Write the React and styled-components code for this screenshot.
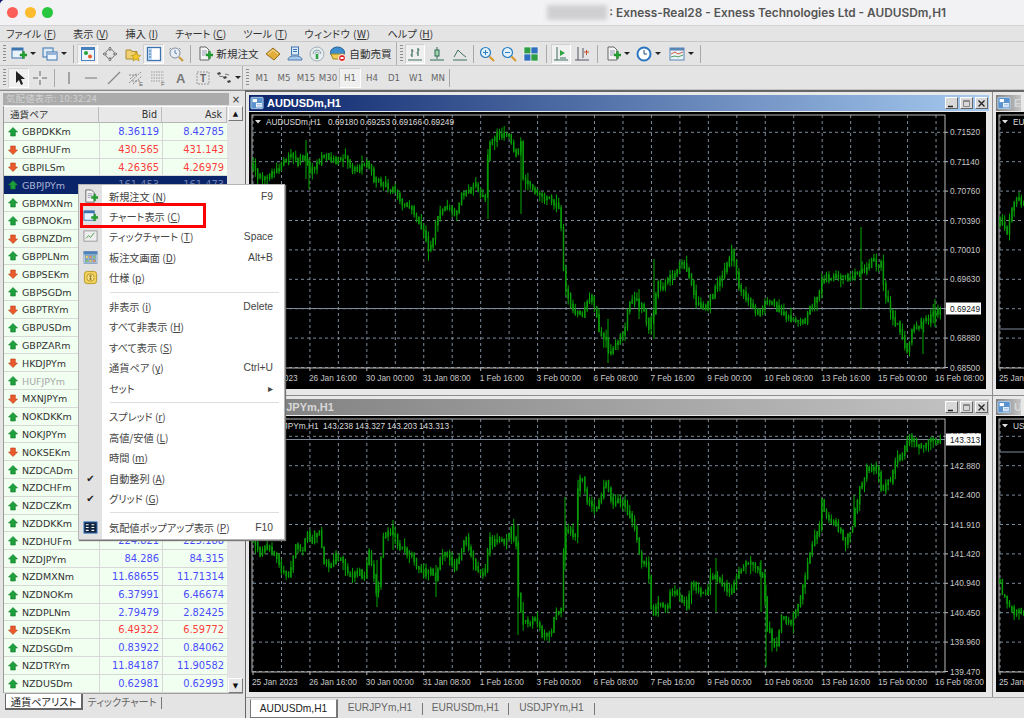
import React from 'react';
import styled, { createGlobalStyle } from 'styled-components';

const GlobalStyle = createGlobalStyle`
  html, body { margin: 0; padding: 0; background: #14146e; }
  * { box-sizing: border-box; }
`;

const CJK = '"Noto Sans CJK JP", "DejaVu Sans", sans-serif';
const UI = '"DejaVu Sans", "Noto Sans CJK JP", sans-serif';

const Shell = styled.div`
  width: 1024px;
  height: 718px;
  overflow: hidden;
  position: relative;
  display: flex;
  flex-direction: column;
  background: #e4e4e4;
  border-top-left-radius: 5px;
  font-family: ${CJK};
  color: #333;
`;

/* mac title bar */
const TitleBar = styled.div`
  height: 26px;
  flex: none;
  display: flex;
  align-items: center;
  padding: 0 78px 0 7px;
  background: #f2f2f4;
  border-bottom: 1px solid #d2d2d2;
`;
const Light = styled.span`
  width: 11px;
  height: 11px;
  border-radius: 50%;
  margin-right: 6.7px;
  background: ${(p) => p.$c};
`;
const BlurPatch = styled.span`
  width: 60px;
  height: 15px;
  margin-left: auto;
  background: #cfcfd1;
  filter: blur(2px);
`;
const WinTitle = styled.span`
  font: 600 11.85px Inter, "Liberation Sans", sans-serif;
  color: #555;
  margin-left: 2px;
  white-space: nowrap;
`;

const MenuBar = styled.div`
  height: 16px;
  flex: none;
  display: flex;
  align-items: center;
  padding-left: 6px;
  gap: 17px;
  font-size: 10.2px;
  font-feature-settings: "palt";
  border-bottom: 1px solid #c8c8c8;
`;
const MenuName = styled.span`
  white-space: nowrap;
  letter-spacing: ${(p) => (p.$wide ? '0.5px' : '0')};
`;
const U = styled.span`
  text-decoration: underline;
  text-underline-offset: 1px;
`;

const ToolRow = styled.div`
  height: 24px;
  flex: none;
  display: flex;
  align-items: center;
  padding-left: 3px;
  border-bottom: 1px solid #c4c4c4;
`;
const ToolGroup = styled.div`
  height: 23px;
  display: flex;
  align-items: center;
  padding-right: ${(p) => p.$pr ?? 4}px;
  border-right: 1px solid #b0b0b0;
  margin-right: 3px;
`;
const Grip = styled.span`
  width: 3px;
  height: 17px;
  margin-right: 2px;
  background: repeating-linear-gradient(#8c8c8c 0 1px, #e4e4e4 1px 3px);
`;
const ToolSep = styled.span`
  width: 1px;
  height: 18px;
  margin: 0 ${(p) => p.$m ?? 3}px;
  background: #a8a8a8;
`;
const ToolBtn = styled.span`
  width: ${(p) => p.$w ?? 21}px;
  height: 20px;
  flex: none;
  display: flex;
  align-items: center;
  justify-content: center;
  gap: 3px;
  font-size: 10.6px;
  color: #333;
  white-space: nowrap;
  ${(p) => p.$on && 'background: #f0f0f0; border: 1px solid #cfcfcf; border-bottom-color: #fff; border-right-color: #fff;'}
`;
const PeriodBtn = styled(ToolBtn)`
  width: 22px;
  font: 8.6px "DejaVu Sans", sans-serif;
  color: #666;
`;
const Caret = styled.span`
  width: 0;
  height: 0;
  flex: none;
  border-left: 3px solid transparent;
  border-right: 3px solid transparent;
  border-top: 3px solid #222;
`;
const Glyph = styled.svg`
  width: ${(p) => p.$s ?? 16}px;
  height: ${(p) => p.$s ?? 16}px;
  flex: none;
  display: block;
`;

const Body = styled.div`
  flex: 1;
  min-height: 0;
  display: flex;
`;

/* market watch */
const Watch = styled.div`
  width: 245px;
  flex: none;
  padding: 2px 2px 0 3px;
  display: flex;
  flex-direction: column;
  border-top: 1px solid #888;
`;
const WatchHead = styled.div`
  height: 12px;
  display: flex;
  align-items: center;
  margin-bottom: 1px;
`;
const WatchTitle = styled.div`
  width: 226px;
  height: 12px;
  line-height: 11px;
  padding-left: 3px;
  background: #ababab;
  color: #d2d2d2;
  font-size: 9.4px;
  letter-spacing: 0.2px;
`;
const WatchClose = styled.span`
  flex: 1;
  text-align: center;
  font: 10px "DejaVu Sans", sans-serif;
  color: #333;
`;
const TableWrap = styled.div`
  display: grid;
  grid-template-columns: 223px 16px;
  border-left: 1px solid #9a9a9a;
`;
const Table = styled.div`
  display: flex;
  flex-direction: column;
  height: 587px;
  overflow: hidden;
`;
const Cols = `
  display: grid;
  grid-template-columns: 95px 63px 65px;
`;
const HeadRow = styled.div`
  ${Cols}
  height: 17px;
  flex: none;
  background: #e8e8e8;
  border-top: 1px solid #fff;
  border-bottom: 1px solid #b4b4b4;
`;
const HeadCell = styled.div`
  font: 9.6px ${UI};
  line-height: 16px;
  padding: 0 ${(p) => (p.$num ? '4px' : '0')} 0 ${(p) => (p.$num ? '0' : '6px')};
  text-align: ${(p) => (p.$num ? 'right' : 'left')};
  border-right: 1px solid #bcbcbc;
`;
const Row = styled.div`
  ${Cols}
  height: 17.8px;
  flex: none;
  background: ${(p) => (p.$sel ? '#0a246a' : '#f1fff1')};
  box-shadow: inset 0 -1px 0 ${(p) => (p.$sel ? '#0a246a' : '#d8d8d8')};
`;
const NameCell = styled.div`
  display: flex;
  align-items: center;
  gap: 3px;
  padding-left: 3px;
  font: 9.5px ${UI};
  color: ${(p) => (p.$sel ? '#a9b4d2' : p.$dim ? '#a8a8a8' : '#333')};
`;
const NumCell = styled.div`
  font: 9.9px ${UI};
  line-height: 17px;
  text-align: right;
  padding-right: 3px;
  color: ${(p) => (p.$sel ? '#6f80b0' : p.$up ? '#4a4aff' : '#ff3c3c')};
  box-shadow: inset 1px 0 0 ${(p) => (p.$sel ? '#0a246a' : '#d8d8d8')};
`;
const Scroll = styled.div`
  display: flex;
  flex-direction: column;
  justify-content: space-between;
  padding-left: 1px;
  height: 587px;
`;
const ScrollBtn = styled.div`
  height: 15px;
  background: #e8e8e8;
  border: 1px solid #fff;
  border-right-color: #777;
  border-bottom-color: #777;
  display: flex;
  align-items: center;
  justify-content: center;
  font: 7px "DejaVu Sans", sans-serif;
  color: #111;
`;
const WatchTabs = styled.div`
  display: flex;
  align-items: center;
  height: 18px;
  margin-left: 2px;
  border-top: 1px solid #a0a0a0;
  font-size: 10.2px;
  font-feature-settings: "palt";
  white-space: nowrap;
`;
const WatchTab = styled.div`
  height: 16px;
  margin-top: -1px;
  line-height: 15px;
  width: ${(p) => p.$w}px;
  text-align: center;
  ${(p) => (p.$on
    ? 'background: #fff; color: #222; border: 1px solid #666; border-top: 0; border-right-width: 2px; border-bottom-width: 2px;'
    : 'color: #666;')}
`;
const TabSep = styled.span`
  width: 1px;
  height: 12px;
  background: #777;
  margin-left: ${(p) => p.$m ?? 0}px;
`;

/* chart windows */
const Mdi = styled.div`
  flex: 1;
  min-width: 0;
  display: flex;
  flex-direction: column;
  border-left: 1px solid #666;
  border-top: 2px solid #666;
  background: #d0d0d0;
`;
const WinGrid = styled.div`
  display: grid;
  grid-template-columns: 746px 1fr;
  grid-template-rows: 303px 302px;
  overflow: hidden;
  background: #8c8c8c;
  column-gap: 1px;
  row-gap: 1px;
`;
const Win = styled.div`
  background: #e8e8e8;
  padding: 3px;
  overflow: hidden;
  min-width: 0;
`;
const WinBar = styled.div`
  height: 16px;
  display: flex;
  align-items: center;
  gap: 3px;
  padding-left: 1px;
  margin-bottom: 1px;
  overflow: hidden;
  white-space: nowrap;
  background: ${(p) => (p.$active
    ? 'linear-gradient(90deg, #0a246a, #a6caf0)'
    : 'linear-gradient(90deg, #808080, #c4c4c4)')};
  color: ${(p) => (p.$active ? '#fff' : '#d8d8d8')};
  font: bold 11px "Liberation Sans", sans-serif;
`;
const WinName = styled.span`
  margin-left: ${(p) => p.$nudge ?? 0}px;
`;
const WinBtns = styled.div`
  margin-left: auto;
  display: flex;
  gap: 2px;
  padding-right: 1px;
`;
const WinBtn = styled.span`
  width: 13px;
  height: 12px;
  background: #d8d8d8;
  border: 1px solid #fff;
  border-right-color: #666;
  border-bottom-color: #666;
  color: ${(p) => (p.$off ? '#999' : '#222')};
  display: flex;
  align-items: center;
  justify-content: center;
`;
const ChartSvg = styled.svg`
  display: block;
  background: #000;
  font-family: "Liberation Sans", sans-serif;
  font-size: 8.3px;
`;

const ChartTabs = styled.div`
  flex: 1;
  display: flex;
  align-items: flex-start;
  padding-left: 4px;
  background: #e4e4e4;
  border-top: 1px solid #aaa;
  font: 10.2px "Liberation Sans", sans-serif;
  color: #666;
`;
const ChartTab = styled.div`
  height: 19px;
  margin-top: 1px;
  line-height: 17px;
  width: ${(p) => p.$w}px;
  text-align: center;
  ${(p) => p.$on && 'background: #fff; color: #222; border: 1px solid #777; border-top: 1px solid #ddd; border-right-width: 2px;'}
`;
const ChartTabSep = styled(TabSep)`
  margin-top: 5px;
  flex: none;
`;

/* context menu */
const Popup = styled.div`
  position: absolute;
  left: 78px;
  top: 184px;
  width: 207px;
  height: 356px;
  padding: 1px 0;
  background: linear-gradient(90deg, #e2e2e2 23px, #fff 23px);
  border: 1px solid #b4b4b4;
  box-shadow: 1px 1px 1px #777;
  font-size: 10.2px;
  font-feature-settings: "palt";
  color: #444;
`;
const Item = styled.div`
  height: 20.4px;
  display: grid;
  grid-template-columns: 22px 1fr auto;
  align-items: center;
  padding-right: 11px;
  white-space: nowrap;
`;
const ItemIcon = styled.span`
  display: flex;
  justify-content: center;
  padding-left: 1px;
`;
const ItemText = styled.span`
  padding-left: 8px;
`;
const ItemKey = styled.span`
  font: 10.3px "Liberation Sans", sans-serif;
  color: #444;
`;
const Sep = styled.div`
  height: 8.4px;
  margin-left: 31px;
  margin-right: 5px;
  display: flex;
  align-items: center;
  &::after { content: ""; flex: 1; height: 1px; background: #dedede; }
`;
const RedBox = styled.div`
  position: absolute;
  left: 1px;
  top: 18px;
  width: 126px;
  height: 25px;
  border: 3px solid #f00;
`;
const Check = styled.span`
  font: 10px "DejaVu Sans", sans-serif;
  color: #222;
`;

/* icons */
const icons = {
  plus: <path d="M9 8h2.500V5.500h2V8H16v2h-2.500v2.500h-2V10H9z" fill="#22a52e" stroke="#0d6e18" strokeWidth=".4" />,
  win: <g><rect x="1" y="2" width="11" height="10" fill="#e8f2fb" stroke="#3d74b0" /><rect x="1" y="2" width="11" height="2.500" fill="#3d74b0" /></g>,
  child: <g><rect x="1" y="1.500" width="14" height="13" rx="1" fill="#5b93cf" stroke="#d8e8f8" strokeWidth=".8" /><rect x="3" y="3.500" width="5" height="3.500" fill="#fff" /><rect x="7" y="8" width="6.500" height="5" fill="#fff" /><path d="M8 9.500h5M8 11.500h5" stroke="#5b93cf" strokeWidth=".7" /></g>,
  doc: <g><path d="M3 1h6l3 3v10H3z" fill="#f4f4f4" stroke="#666" /><path d="M5 5h5M5 7h5M5 9h3" stroke="#88a" strokeWidth=".8" /></g>,
  profiles: <g><rect x="1" y="2" width="10" height="9" fill="#dbe9f7" stroke="#3d74b0" /><rect x="5" y="6" width="10" height="8" fill="#eef4fb" stroke="#3d74b0" /><path d="M6 8h8" stroke="#3d74b0" /></g>,
  market: <g><rect x="1.500" y="1.500" width="13" height="13" fill="#eef5fc" stroke="#4a80bb" /><rect x="2" y="2" width="12" height="2" fill="#4a80bb" /><circle cx="6" cy="7" r="2" fill="#27a33a" /><circle cx="10" cy="10.500" r="2" fill="#e2602c" /></g>,
  nav: <g fill="none" stroke="#777"><circle cx="8" cy="8" r="4.500" /><path d="M8 1v4M8 11v4M1 8h4M11 8h4" /><path d="M6.500 2.500 8 1l1.500 1.500M6.500 13.500 8 15l1.500-1.500M2.500 6.500 1 8l1.500 1.500M13.500 6.500 15 8l-1.500 1.500" /></g>,
  star: <g><path d="M1 4h5l1 1.500h5V13H1z" fill="#f0d070" stroke="#a98a30" /><path d="M11 6l1.500 3 3.300.4-2.400 2.200.7 3.300L11 13.300 8 15l.7-3.300-2.400-2.200 3.300-.4z" fill="#f3c629" stroke="#b08d10" strokeWidth=".6" /></g>,
  term: <g><rect x="1.500" y="1.500" width="13" height="13" fill="#fff" stroke="#3d74b0" strokeWidth="1.300" /><rect x="2" y="2" width="4" height="12" fill="#bcd6f0" /><path d="M3 5h2M3 8h2M3 11h2" stroke="#3d74b0" /></g>,
  tester: <g fill="none"><circle cx="7" cy="7" r="5" fill="#e8eef4" stroke="#7f8fa3" /><path d="M7 4v3l2 1" stroke="#5a7ea8" /><path d="M3 2 1.500 3.500M11 2l1.500 1.500" stroke="#7f8fa3" /><path d="M11 11l4 4" stroke="#c69a3c" strokeWidth="2" /></g>,
  book: <g><path d="M1 8l7-6 7 6-6 6z" fill="#e2ad3b" stroke="#96701b" /><path d="M3 8l5-4 5 4" stroke="#f6e2a6" fill="none" /></g>,
  signal: <g><path d="M1 14c0-3 3-4 7-4s7 1 7 4z" fill="#a9c8ea" stroke="#4d7fb5" /><rect x="4.500" y="1" width="7" height="8" fill="#dcebfa" stroke="#3d74b0" /><path d="M6 3.500h4M6 5.500h4" stroke="#3d74b0" /></g>,
  mql: <g fill="none"><circle cx="8" cy="8" r="7" fill="#e6ecef" stroke="#9fb0b8" /><path d="M4 8a4 4 0 0 1 8 0M6 8a2 2 0 0 1 4 0" stroke="#8aa" /><path d="M8 8v5" stroke="#2ea33f" strokeWidth="2.500" /></g>,
  auto: <g><ellipse cx="7.500" cy="6.500" rx="7" ry="5.500" fill="#3f8fcf" stroke="#245e91" /><path d="M1 8h13l-1 5H3z" fill="#f0cd50" stroke="#a48820" /><circle cx="12" cy="12" r="3.500" fill="#e02020" stroke="#fff" /><rect x="10.500" y="11" width="3" height="2" fill="#fff" /></g>,
  bars: <g stroke="#3f6f62" strokeWidth="1.200" fill="none"><path d="M1 14h14M5 3v8M3.500 9H5M5 5h1.500M11 2v8M9.500 7H11M11 4h1.500" /></g>,
  candle: <g stroke="#2e6b57" fill="none"><path d="M1 14h14M8 1v12" /><rect x="6" y="4" width="4" height="6" fill="#9ed4a8" stroke="#2e6b57" /></g>,
  line: <g stroke="#3f6f62" fill="none"><path d="M1 14h14M2 11l4-7 4 4 4 3" /></g>,
  zoomIn: <g fill="none"><circle cx="6.500" cy="6.500" r="5" fill="#e2f1fb" stroke="#2a7fc4" strokeWidth="1.200" /><path d="M4 6.500h5M6.500 4v5" stroke="#2a7fc4" /><path d="M10.500 10.500l4.500 4.500" stroke="#d99a30" strokeWidth="2.200" /></g>,
  zoomOut: <g fill="none"><circle cx="6.500" cy="6.500" r="5" fill="#e2f1fb" stroke="#2a7fc4" strokeWidth="1.200" /><path d="M4 6.500h5" stroke="#2a7fc4" /><path d="M10.500 10.500l4.500 4.500" stroke="#d99a30" strokeWidth="2.200" /></g>,
  tile: <g stroke="#fff" strokeWidth=".6"><rect x="1" y="1" width="7" height="7" fill="#2f9e44" /><rect x="8" y="1" width="7" height="7" fill="#2f6fc0" /><rect x="1" y="8" width="7" height="7" fill="#2f6fc0" /><rect x="8" y="8" width="7" height="7" fill="#2f9e44" /></g>,
  scroll: <g fill="none" stroke="#3f6f62"><path d="M1 14h14M4 1v13" /><path d="M7 4l5 3-5 3z" fill="#2ea33f" stroke="none" /><path d="M7 12h6" /></g>,
  shift: <g fill="none" stroke="#556"><path d="M1 14h14M4 1v13M9 2v10" /><path d="M10 6h5M12.500 4v5" stroke="#c65028" /></g>,
  period: <g fill="none"><circle cx="8" cy="8" r="6.500" fill="#fff" stroke="#2a76c0" strokeWidth="2" /><path d="M8 4v4h3" stroke="#1d4e80" /></g>,
  template: <g><rect x="1" y="2" width="14" height="12" fill="#eaf2fb" stroke="#5a86b5" /><rect x="1" y="2" width="14" height="2.500" fill="#5a86b5" /><path d="M2 8l4-2 3 2 5-2" stroke="#d05a3a" fill="none" /><path d="M2 11l4-1 3 1 5-2" stroke="#4aa05a" fill="none" /></g>,
  cursor: <path d="M5 1v12l3-3 2 5 2-1-2-5h4z" fill="#222" />,
  cross: <path d="M8 1v5M8 10v5M1 8h5M10 8h5" stroke="#666" fill="none" />,
  vline: <path d="M8 2v12" stroke="#777" strokeWidth="1.200" />,
  hline: <path d="M2 8h12" stroke="#777" strokeWidth="1.200" />,
  trend: <path d="M2 14 14 2" stroke="#888" strokeWidth="1.200" />,
  fib: <g stroke="#888" fill="none"><path d="M1 13 13 2M2 9l7-6M5 14l9-8M1 5h9M4 11h9" strokeDasharray="2 1" /><text x="11" y="16" fontSize="6" fill="#666" stroke="none" fontFamily="Liberation Sans">E</text></g>,
  fibo: <g stroke="#999" fill="none"><path d="M1 2h13M1 5h13M1 8h13M1 11h13" strokeDasharray="1.500 1" /><text x="11" y="16" fontSize="6" fill="#666" stroke="none" fontFamily="Liberation Sans">F</text></g>,
  letter: <text x="3" y="13" fontSize="13" fontWeight="bold" fill="#777" fontFamily="Liberation Sans">A</text>,
  textBox: <g><rect x="2" y="2" width="12" height="12" fill="none" stroke="#999" strokeDasharray="2 1" /><text x="5" y="12" fontSize="10" fontWeight="bold" fill="#666" fontFamily="Liberation Sans">T</text></g>,
  shapes: <g fill="#444"><path d="M1 3l3-1 1 2-3 1zM7 7l3-1 1 2-3 1zM11 11l3-1 1 2-3 1z" /><path d="M3 6l5 1M9 4l4 1" stroke="#777" /></g>,
  tick: <g><rect x="1" y="2" width="14" height="11" fill="#eee" stroke="#999" /><path d="M3 10l3-3 2 2 4-5" stroke="#46a046" fill="none" /></g>,
  board: <g stroke="#6a8fb5" strokeWidth=".7"><rect x="1" y="1.500" width="14" height="13" fill="#cfe2f5" /><rect x="1" y="1.500" width="14" height="3" fill="#4a80bb" /><rect x="2.500" y="6" width="3" height="3" fill="#f0d060" /><rect x="6.500" y="6" width="3" height="3" fill="#f09060" /><rect x="10.500" y="6" width="3" height="3" fill="#90c870" /><rect x="2.500" y="10" width="3" height="3" fill="#90c870" /><rect x="6.500" y="10" width="3" height="3" fill="#f0d060" /><rect x="10.500" y="10" width="3" height="3" fill="#f09060" /></g>,
  coin: <g><rect x="1.500" y="1.500" width="13" height="13" rx="3" fill="#f2d25a" stroke="#b8962a" /><circle cx="8" cy="8" r="4" fill="#f7e28c" stroke="#b8962a" /><path d="M8 5v6M6.500 6.500h3M6.500 9.500h3" stroke="#8a6a10" strokeWidth=".8" /></g>,
  popup: <g><rect x="1" y="2" width="14" height="12" fill="#10233f" stroke="#3f82c8" /><path d="M3 5h3M3 8h3M3 11h3M9 5h3M9 8h3M9 11h3" stroke="#fff" strokeWidth="1.200" /></g>,
};

function Ico({ name, plus, size }) {
  return (
    <Glyph viewBox="0 0 16 16" $s={size}>
      {icons[name]}
      {plus && icons.plus}
    </Glyph>
  );
}

function Arrow({ up }) {
  const fill = up ? '#1ea03c' : '#ea5a2c';
  const edge = up ? '#0f7a28' : '#b83c14';
  return (
    <Glyph viewBox="0 0 12 12" $s={12}>
      <path
        d={up ? 'M6 1.500l4.500 4.500H8.300v4H3.700V6H1.500z' : 'M6 10.500 1.500 6h2.200V2h4.600v4h2.200z'}
        fill={fill}
        stroke={edge}
        strokeWidth=".6"
        strokeLinejoin="round"
      />
    </Glyph>
  );
}

/* chart data: way points in page pixels, traced from the two main charts */
const audPts = [[254,168],[258,176],[267,180],[273,172],[283,167],[292,155],[300,165],[307,155],[310,175],[318,163],[327,155],[337,163],[348,158],[353,172],[363,167],[368,162],[375,180],[385,187],[397,193],[403,207],[413,210],[420,225],[427,240],[430,255],[435,233],[440,213],[447,208],[458,215],[462,198],[477,187],[483,200],[487,196],[489,150],[497,137],[510,137],[517,157],[522,145],[524,178],[533,190],[542,197],[550,202],[560,208],[562,227],[564,267],[567,290],[573,310],[582,317],[592,297],[597,310],[600,333],[608,343],[610,356],[617,343],[625,333],[630,303],[637,300],[643,307],[650,327],[655,312],[658,285],[663,287],[673,278],[683,263],[690,277],[697,303],[705,312],[713,297],[723,277],[733,253],[740,287],[750,303],[760,317],[767,300],[777,307],[787,317],[797,323],[807,323],[812,307],[818,300],[823,280],[840,278],[850,280],[860,273],[870,267],[873,260],[882,267],[887,297],[893,317],[902,333],[907,353],[913,333],[923,323],[930,320],[938,310],[943,313]];
const audSpikes = [[307,141,180],[310,160,190],[489,150,220],[522,142,215],[655,260,340],[862,228,310],[924,323,355],[609,320,364],[640,290,320],[936,300,328]];
const jpyPts = [[254,540],[262,555],[270,545],[280,562],[283,572],[290,575],[297,545],[303,552],[308,535],[313,542],[320,528],[325,562],[330,568],[338,555],[345,565],[352,578],[360,572],[365,578],[370,552],[375,575],[378,598],[381,580],[383,538],[393,532],[400,545],[410,552],[417,565],[425,575],[433,568],[437,582],[442,552],[450,558],[455,570],[462,552],[467,538],[472,555],[480,572],[485,575],[490,542],[507,542],[512,528],[517,545],[519,592],[523,618],[528,625],[537,618],[543,635],[552,635],[557,612],[562,615],[563,575],[566,528],[572,532],[576,542],[578,492],[583,475],[588,502],[597,512],[603,495],[607,483],[613,502],[623,503],[633,518],[638,538],[642,562],[647,562],[650,582],[653,615],[660,602],[668,608],[672,592],[680,595],[687,608],[693,585],[708,595],[712,575],[720,582],[733,592],[743,565],[755,565],[765,575],[767,628],[773,638],[777,652],[782,618],[792,622],[800,602],[807,572],[813,545],[820,528],[823,502],[828,518],[837,525],[847,542],[853,528],[857,505],[863,482],[870,467],[878,468],[883,492],[892,478],[897,458],[903,458],[910,437],[923,448],[933,438],[940,445],[943,440]];
const jpySpikes = [[378,560,607],[394,520,550],[437,565,597],[519,525,635],[566,497,570],[579,480,520],[762,560,612],[767,585,667],[855,495,525],[717,558,612]];
const eurPts = [[1000,222],[1007,233],[1013,205],[1018,202],[1024,204]];
const usdPts = [[1000,582],[1003,595],[1013,612],[1024,612]];

function makeBars(pts, spikes, seed) {
  let s = seed;
  const rnd = () => {
    s = (s * 16807) % 2147483647;
    return s / 2147483647;
  };
  let wick = '';
  let body = '';
  let i = 0;
  let prev = pts[0][1];
  for (let x = pts[0][0]; x <= pts[pts.length - 1][0]; x += 2.37) {
    while (i < pts.length - 2 && pts[i + 1][0] < x) i += 1;
    const [x0, y0] = pts[i];
    const [x1, y1] = pts[i + 1];
    const y = y0 + ((y1 - y0) * (x - x0)) / (x1 - x0) + (rnd() - 0.5) * 5;
    // a bar covers the way from the last close, so steep moves stay solid
    const top = Math.min(y, prev) - rnd() * 3;
    const bot = Math.max(y, prev) + rnd() * 3;
    body += `M${x.toFixed(1)} ${top.toFixed(1)}V${bot.toFixed(1)}`;
    wick += `M${x.toFixed(1)} ${(top - rnd() * rnd() * 9).toFixed(1)}V${(bot + rnd() * rnd() * 10).toFixed(1)}`;
    prev = y;
  }
  spikes.forEach(([x, a, b]) => {
    wick += `M${x} ${a}V${b}`;
  });
  return { wick, body };
}

const gridXs = Array.from({ length: 25 }, (_, i) => 254 + i * 28.46);
const dates = ['25 Jan 2023', '26 Jan 16:00', '30 Jan 00:00', '31 Jan 08:00', '1 Feb 16:00', '3 Feb 00:00', '6 Feb 08:00', '7 Feb 16:00', '9 Feb 00:00', '10 Feb 08:00', '13 Feb 16:00', '15 Feb 00:00', '16 Feb 08:00'];
const GRID_ROWS = 9;
const GRID_STEP = 29.4;

function Chart({ ox, oy, width, height, left, top, pts, spikes, seed, prices, head, ohlc, ohlcX, last, lastY, lineY }) {
  const { wick, body } = makeBars(pts, spikes, seed);
  const bottom = top + 253;
  const ys = Array.from({ length: GRID_ROWS }, (_, i) => top + 17.3 + i * GRID_STEP);
  const main = left === 254;
  const xs = main ? gridXs : [left];
  const frameX2 = main ? 946 : 1100;
  return (
    <ChartSvg width={width} height={height} viewBox={`${ox} ${oy} ${width} ${height}`}>
      {xs.map((x) => (
        <path key={x} d={`M${x} ${top}V${bottom}`} stroke="#7d8c9c" strokeDasharray="3 3" />
      ))}
      {ys.map((y) => (
        <path key={y} d={`M${left} ${y}H${frameX2}`} stroke="#7d8c9c" strokeDasharray="3 3" />
      ))}
      <path d={`M${left} ${lineY}H${frameX2}`} stroke="#7f8c9c" />
      <rect x={left - 1} y={top} width={frameX2 - left + 1} height={253} fill="none" stroke="#b8b8b8" />
      <path d={wick} stroke="#00a800" strokeWidth="1" fill="none" />
      <path d={body} stroke="#089a08" strokeWidth="1.500" fill="none" />
      <path d={`M${left + 2} ${top + 5}h6l-3 3.500z`} fill="#ddd" />
      <text x={left + 13} y={top + 10} fill="#ddd">{head}</text>
      {ohlc && ohlc.map((v, i) => (
        <text key={v} x={ohlcX + i * 32} y={top + 10} fill="#ddd">{v}</text>
      ))}
      {prices && prices.map((p, i) => (
        <g key={ys[i]}>
          <path d={`M946 ${ys[i]}h3`} stroke="#b8b8b8" />
          {p && <text x={951} y={ys[i] + 3} fill="#c8c8c8">{p}</text>}
        </g>
      ))}
      {dates.map((d, i) => (
        <g key={d}>
          <path d={`M${left + i * 56.92} ${bottom}v3`} stroke="#b8b8b8" />
          <text x={left + i * 56.92 - 1} y={bottom + 13} fill="#c8c8c8">{d}</text>
        </g>
      ))}
      {last && (
        <g>
          <rect x={947} y={lastY - 6} width={35} height={12} fill="#fff" />
          <text x={951} y={lastY + 3} fill="#111">{last}</text>
        </g>
      )}
    </ChartSvg>
  );
}

function Window({ title, active, showBtns, nudge, children }) {
  return (
    <Win>
      <WinBar $active={active}>
        <Ico name="child" size={14} />
        <WinName $nudge={nudge}>{title}</WinName>
        {showBtns && (
          <WinBtns>
            <WinBtn><Glyph viewBox="0 0 9 9" $s={9}><path d="M1 7.500h5" stroke="#222" strokeWidth="1.500" /></Glyph></WinBtn>
            <WinBtn $off><Glyph viewBox="0 0 9 9" $s={9}><path d="M1.500 1.500h6v6h-6zM1.500 2.500h6" fill="none" stroke="#888" /></Glyph></WinBtn>
            <WinBtn><Glyph viewBox="0 0 9 9" $s={9}><path d="M1.500 1.500l6 6M7.500 1.500l-6 6" stroke="#222" strokeWidth="1.300" /></Glyph></WinBtn>
          </WinBtns>
        )}
      </WinBar>
      {children}
    </Win>
  );
}

const rows = [
  ['GBPDKKm', 1, '8.36119', '8.42785'],
  ['GBPHUFm', 0, '430.565', '431.143'],
  ['GBPILSm', 0, '4.26365', '4.26979'],
  ['GBPJPYm', 1, '161.453', '161.473'],
  ['GBPMXNm', 1], ['GBPNOKm', 1], ['GBPNZDm', 0], ['GBPPLNm', 1], ['GBPSEKm', 0],
  ['GBPSGDm', 1], ['GBPTRYm', 0], ['GBPUSDm', 1], ['GBPZARm', 1], ['HKDJPYm', 0],
  ['HUFJPYm', 1], ['MXNJPYm', 0], ['NOKDKKm', 1], ['NOKJPYm', 1], ['NOKSEKm', 0],
  ['NZDCADm', 1], ['NZDCHFm', 1], ['NZDCZKm', 1], ['NZDDKKm', 1],
  ['NZDHUFm', 1, '224.821', '225.188'],
  ['NZDJPYm', 1, '84.286', '84.315'],
  ['NZDMXNm', 1, '11.68655', '11.71314'],
  ['NZDNOKm', 1, '6.37991', '6.46674'],
  ['NZDPLNm', 1, '2.79479', '2.82425'],
  ['NZDSEKm', 0, '6.49322', '6.59772'],
  ['NZDSGDm', 1, '0.83922', '0.84062'],
  ['NZDTRYm', 1, '11.84187', '11.90582'],
  ['NZDUSDm', 1, '0.62981', '0.62993'],
];

const menuNames = [['ファイル', 'F'], ['表示', 'V'], ['挿入', 'I'], ['チャート', 'C'], ['ツール', 'T'], ['ウィンドウ', 'W'], ['ヘルプ', 'H']];

function Key({ k }) {
  return <> (<U>{k}</U>)</>;
}

function MenuItem({ icon, plus, check, label, k, shortcut, arrow }) {
  return (
    <Item>
      <ItemIcon>
        {icon && <Ico name={icon} plus={plus} size={15} />}
        {check && <Check>✔</Check>}
      </ItemIcon>
      <ItemText>{label}{k && <Key k={k} />}</ItemText>
      {shortcut && <ItemKey>{shortcut}</ItemKey>}
      {arrow && <ItemKey>▸</ItemKey>}
    </Item>
  );
}

export default function App() {
  return (
    <Shell>
      <GlobalStyle />
      <TitleBar>
        <Light $c="#fc5f57" />
        <Light $c="#fdbc2e" />
        <Light $c="#28c73f" />
        <BlurPatch />
        <WinTitle>: Exness-Real28 - Exness Technologies Ltd - AUDUSDm,H1</WinTitle>
      </TitleBar>
      <MenuBar>
        {menuNames.map(([n, k]) => (
          <MenuName key={k} $wide={k === 'W'}>{n}<Key k={k} /></MenuName>
        ))}
      </MenuBar>

      <ToolRow>
        <ToolGroup $pr={2}>
          <Grip />
          <ToolBtn $w={31}><Ico name="win" plus /><Caret /></ToolBtn>
          <ToolBtn $w={31}><Ico name="profiles" /><Caret /></ToolBtn>
          <ToolSep $m={3} />
          <ToolBtn $on><Ico name="market" /></ToolBtn>
          <ToolBtn $w={24}><Ico name="nav" /></ToolBtn>
          <ToolBtn $w={21}><Ico name="star" /></ToolBtn>
          <ToolBtn $on $w={21}><Ico name="term" /></ToolBtn>
          <ToolBtn $w={23}><Ico name="tester" /></ToolBtn>
          <ToolSep $m={3} />
          <ToolBtn $w={68}><Ico name="doc" plus />新規注文</ToolBtn>
          <ToolBtn $w={22}><Ico name="book" /></ToolBtn>
          <ToolBtn $w={22}><Ico name="signal" /></ToolBtn>
          <ToolBtn $w={22}><Ico name="mql" /></ToolBtn>
          <ToolBtn $w={66}><Ico name="auto" />自動売買</ToolBtn>
        </ToolGroup>
        <Grip />
        <ToolBtn $on $w={20}><Ico name="bars" /></ToolBtn>
        <ToolBtn $w={24}><Ico name="candle" /></ToolBtn>
        <ToolBtn $w={22}><Ico name="line" /></ToolBtn>
        <ToolSep $m={2} />
        <ToolBtn $w={22}><Ico name="zoomIn" /></ToolBtn>
        <ToolBtn $w={21}><Ico name="zoomOut" /></ToolBtn>
        <ToolBtn $w={23}><Ico name="tile" /></ToolBtn>
        <ToolSep $m={4} />
        <ToolBtn $on $w={20}><Ico name="scroll" /></ToolBtn>
        <ToolBtn $w={22}><Ico name="shift" /></ToolBtn>
        <ToolSep $m={4} />
        <ToolBtn $w={30}><Ico name="doc" plus /><Caret /></ToolBtn>
        <ToolBtn $w={32}><Ico name="period" /><Caret /></ToolBtn>
        <ToolBtn $w={34}><Ico name="template" /><Caret /></ToolBtn>
        <ToolSep $m={2} />
      </ToolRow>

      <ToolRow>
        <ToolGroup $pr={0}>
          <Grip />
          <ToolBtn $on><Ico name="cursor" /></ToolBtn>
          <ToolBtn $w={22}><Ico name="cross" /></ToolBtn>
          <ToolSep $m={3} />
          <ToolBtn $w={22}><Ico name="vline" /></ToolBtn>
          <ToolBtn $w={22}><Ico name="hline" /></ToolBtn>
          <ToolBtn $w={23}><Ico name="trend" /></ToolBtn>
          <ToolBtn $w={22}><Ico name="fib" /></ToolBtn>
          <ToolBtn $w={22}><Ico name="fibo" /></ToolBtn>
          <ToolBtn $w={23}><Ico name="letter" /></ToolBtn>
          <ToolBtn $w={22}><Ico name="textBox" /></ToolBtn>
          <ToolBtn $w={28}><Ico name="shapes" /><Caret /></ToolBtn>
        </ToolGroup>
        <Grip />
        {['M1', 'M5', 'M15', 'M30', 'H1', 'H4', 'D1', 'W1', 'MN'].map((m) => (
          <PeriodBtn key={m} $on={m === 'H1'}>{m}</PeriodBtn>
        ))}
        <ToolSep $m={0} />
      </ToolRow>

      <Body>
        <Watch>
          <WatchHead>
            <WatchTitle>気配値表示: 10:32:24</WatchTitle>
            <WatchClose>×</WatchClose>
          </WatchHead>
          <TableWrap>
            <Table>
              <HeadRow>
                <HeadCell>通貨ペア</HeadCell>
                <HeadCell $num>Bid</HeadCell>
                <HeadCell $num>Ask</HeadCell>
              </HeadRow>
              {rows.map(([name, up, bid, ask]) => {
                const sel = name === 'GBPJPYm';
                return (
                  <Row key={name} $sel={sel}>
                    <NameCell $sel={sel} $dim={name === 'HUFJPYm'}>
                      <Arrow up={up === 1} />
                      {name}
                    </NameCell>
                    <NumCell $sel={sel} $up={up === 1}>{bid}</NumCell>
                    <NumCell $sel={sel} $up={up === 1}>{ask}</NumCell>
                  </Row>
                );
              })}
            </Table>
            <Scroll>
              <ScrollBtn>▲</ScrollBtn>
              <ScrollBtn>▼</ScrollBtn>
            </Scroll>
          </TableWrap>
          <WatchTabs>
            <WatchTab $on $w={78}>通貨ペアリスト</WatchTab>
            <WatchTab $w={78}>ティックチャート</WatchTab>
            <TabSep />
          </WatchTabs>
        </Watch>

        <Mdi>
          <WinGrid>
            <Window title="AUDUSDm,H1" active showBtns>
              <Chart
                ox={250} oy={113} width={737} height={277} left={254} top={116}
                pts={audPts} spikes={audSpikes} seed={4711}
                prices={['0.71520', '0.71140', '0.70760', '0.70390', '0.70010', '0.69630', '', '0.68880', '0.68500']}
                head="AUDUSDm,H1"
                ohlc={['0.69180', '0.69253', '0.69166', '0.69249']} ohlcX={329}
                last="0.69249" lastY={309.5} lineY={309.5}
              />
            </Window>
            <Window title="EURUSDm,H1">
              <Chart
                ox={996} oy={113} width={28} height={277} left={1000} top={116}
                pts={eurPts} spikes={[]} seed={99}
                head="EURUSDm,H1" lineY={330}
              />
            </Window>
            <Window title="EURJPYm,H1" showBtns nudge={-4}>
              <Chart
                ox={250} oy={416} width={737} height={276} left={254} top={419}
                pts={jpyPts} spikes={jpySpikes} seed={8123}
                prices={['143.370', '142.880', '142.400', '141.910', '141.420', '140.940', '140.450', '139.960', '139.470']}
                head="EURJPYm,H1"
                ohlc={['143.238', '143.327', '143.203', '143.313']} ohlcX={324}
                last="143.313" lastY={439.5} lineY={439.5}
              />
            </Window>
            <Window title="USDJPYm,H1">
              <Chart
                ox={996} oy={416} width={28} height={276} left={1000} top={419}
                pts={usdPts} spikes={[]} seed={321}
                head="USDJPYm,H1" lineY={452}
              />
            </Window>
          </WinGrid>
          <ChartTabs>
            <ChartTab $on $w={88}>AUDUSDm,H1</ChartTab>
            <ChartTab $w={84}>EURJPYm,H1</ChartTab>
            <ChartTabSep />
            <ChartTab $w={85}>EURUSDm,H1</ChartTab>
            <ChartTabSep />
            <ChartTab $w={85}>USDJPYm,H1</ChartTab>
            <ChartTabSep />
          </ChartTabs>
        </Mdi>
      </Body>

      <Popup>
        <MenuItem icon="doc" plus label="新規注文" k="N" shortcut="F9" />
        <MenuItem icon="win" plus label="チャート表示" k="C" />
        <MenuItem icon="tick" label="ティックチャート" k="T" shortcut="Space" />
        <MenuItem icon="board" label="板注文画面" k="D" shortcut="Alt+B" />
        <MenuItem icon="coin" label="仕様" k="p" />
        <Sep />
        <MenuItem label="非表示" k="i" shortcut="Delete" />
        <MenuItem label="すべて非表示" k="H" />
        <MenuItem label="すべて表示" k="S" />
        <MenuItem label="通貨ペア" k="y" shortcut="Ctrl+U" />
        <MenuItem label="セット" arrow />
        <Sep />
        <MenuItem label="スプレッド" k="r" />
        <MenuItem label="高値/安値" k="L" />
        <MenuItem label="時間" k="m" />
        <MenuItem check label="自動整列" k="A" />
        <MenuItem check label="グリッド" k="G" />
        <Sep />
        <MenuItem icon="popup" label="気配値ポップアップ表示" k="P" shortcut="F10" />
        <RedBox />
      </Popup>
    </Shell>
  );
}
